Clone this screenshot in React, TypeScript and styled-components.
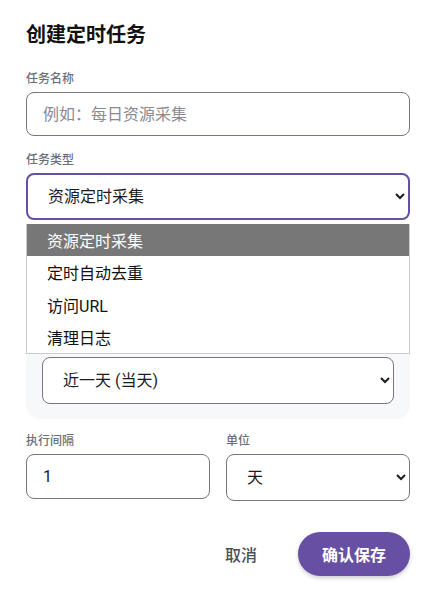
import styled, { createGlobalStyle } from "styled-components";

const COLOR = {
  primary: "#6750a4",
  text: "#1c1b1f",
  label: "#6b6e78",
  border: "#79747e",
  placeholder: "#8a8a8f",
  panel: "#f7f8fa",
  optionActive: "#777777",
  listBorder: "#cbcbcb",
};

const FONT = `Roboto, "Noto Sans CJK SC", "Noto Sans", sans-serif`;

const GlobalStyle = createGlobalStyle`
  html, body {
    margin: 0;
    padding: 0;
    background: #ffffff;
  }
  body {
    font-family: ${FONT};
    color: ${COLOR.text};
  }
  * {
    box-sizing: border-box;
  }
`;

const taskTypes = ["资源定时采集", "定时自动去重", "访问URL", "清理日志"];

const App = () => {
  return (
    <>
      <GlobalStyle />
      <Dialog>
        <Title>创建定时任务</Title>

        <Field>
          <Label>任务名称</Label>
          <TextInput placeholder="例如：每日资源采集" />
        </Field>

        <Field>
          <Label>任务类型</Label>
          <SelectWrap>
            <Select defaultValue={taskTypes[0]} $focus>
              {taskTypes.map((t) => (
                <option key={t}>{t}</option>
              ))}
            </Select>
            {/* open option list of the select above */}
            <OptionList>
              {taskTypes.map((t, i) => (
                <Option key={t} $active={i === 0}>
                  {t}
                </Option>
              ))}
            </OptionList>
          </SelectWrap>
        </Field>

        <Panel>
          <Field>
            <Label>采集资源</Label>
            <Select defaultValue="全部资源">
              <option>全部资源</option>
            </Select>
          </Field>
          <Field>
            <Label>采集范围</Label>
            <Select defaultValue="近一天 (当天)">
              <option>近一天 (当天)</option>
              <option>近三天</option>
              <option>近一周</option>
            </Select>
          </Field>
        </Panel>

        <Row>
          <Field>
            <Label>执行间隔</Label>
            <TextInput defaultValue="1" $compact />
          </Field>
          <Field>
            <Label>单位</Label>
            <Select defaultValue="天">
              <option>分钟</option>
              <option>小时</option>
              <option>天</option>
            </Select>
          </Field>
        </Row>

        <Actions>
          <CancelButton>取消</CancelButton>
          <SaveButton>确认保存</SaveButton>
        </Actions>
      </Dialog>
    </>
  );
};

const Dialog = styled.div`
  width: 434px;
  padding: 21px 24px 22px 26px;
  display: flex;
  flex-direction: column;
`;

const Title = styled.h2`
  margin: 0 0 23px;
  font-size: 20px;
  line-height: 28px;
  font-weight: 700;
  color: #111111;
`;

const Field = styled.div`
  display: flex;
  flex-direction: column;
  min-width: 0;
  margin-bottom: 17px;
`;

const Label = styled.label`
  font-size: 12px;
  line-height: 15px;
  font-weight: 500;
  color: ${COLOR.label};
  margin-bottom: 5px;
`;

const TextInput = styled.input<{ $compact?: boolean }>`
  width: 100%;
  min-width: 0;
  height: ${(p) => (p.$compact ? "45px" : "44px")};
  padding: 0 16px;
  border: 1px solid ${COLOR.border};
  border-radius: 8px;
  font-family: ${FONT};
  font-size: 16px;
  color: ${COLOR.text};
  background: #ffffff;
  outline: none;
  &::placeholder {
    color: ${COLOR.placeholder};
  }
`;

const SelectWrap = styled.div`
  position: relative;
  display: flex;
  flex-direction: column;
`;

const Select = styled.select<{ $focus?: boolean }>`
  width: 100%;
  min-width: 0;
  height: 47px;
  padding: 0 12px 0 16px;
  border: ${(p) =>
    p.$focus ? `2px solid ${COLOR.primary}` : `1px solid ${COLOR.border}`};
  border-radius: 8px;
  font-family: ${FONT};
  font-size: 16px;
  color: ${COLOR.text};
  background: #ffffff;
  outline: none;
`;

const OptionList = styled.div`
  position: absolute;
  top: 51px;
  left: 0;
  right: 0;
  z-index: 10;
  background: #ffffff;
  border: 1px solid ${COLOR.listBorder};
  border-top: none;
  display: flex;
  flex-direction: column;
`;

const Option = styled.div<{ $active?: boolean }>`
  height: 32.25px;
  display: flex;
  align-items: center;
  padding-left: 20px;
  font-size: 16px;
  color: ${(p) => (p.$active ? "#ffffff" : "#111111")};
  background: ${(p) => (p.$active ? COLOR.optionActive : "transparent")};
`;

const Panel = styled.div`
  background: ${COLOR.panel};
  border-radius: 14px;
  padding: 16px 16px 15px;
  margin-bottom: 15px;
  display: flex;
  flex-direction: column;
  & > div:last-child {
    margin-bottom: 0;
  }
`;

const Row = styled.div`
  display: grid;
  grid-template-columns: minmax(0, 1fr) minmax(0, 1fr);
  column-gap: 16px;
  align-items: start;
  & > div {
    margin-bottom: 0;
  }
`;

const Actions = styled.div`
  display: flex;
  justify-content: flex-end;
  align-items: center;
  gap: 41px;
  margin-top: 31px;
`;

const CancelButton = styled.button`
  border: none;
  background: transparent;
  padding: 0;
  font-family: ${FONT};
  font-size: 16px;
  font-weight: 500;
  color: #4a4f5a;
  cursor: pointer;
`;

const SaveButton = styled.button`
  height: 44px;
  padding: 0 24px;
  border: none;
  border-radius: 22px;
  background: ${COLOR.primary};
  color: #ffffff;
  font-family: ${FONT};
  font-size: 16px;
  font-weight: 700;
  box-shadow: 0 2px 4px rgba(0, 0, 0, 0.2);
  cursor: pointer;
`;

export default App;
